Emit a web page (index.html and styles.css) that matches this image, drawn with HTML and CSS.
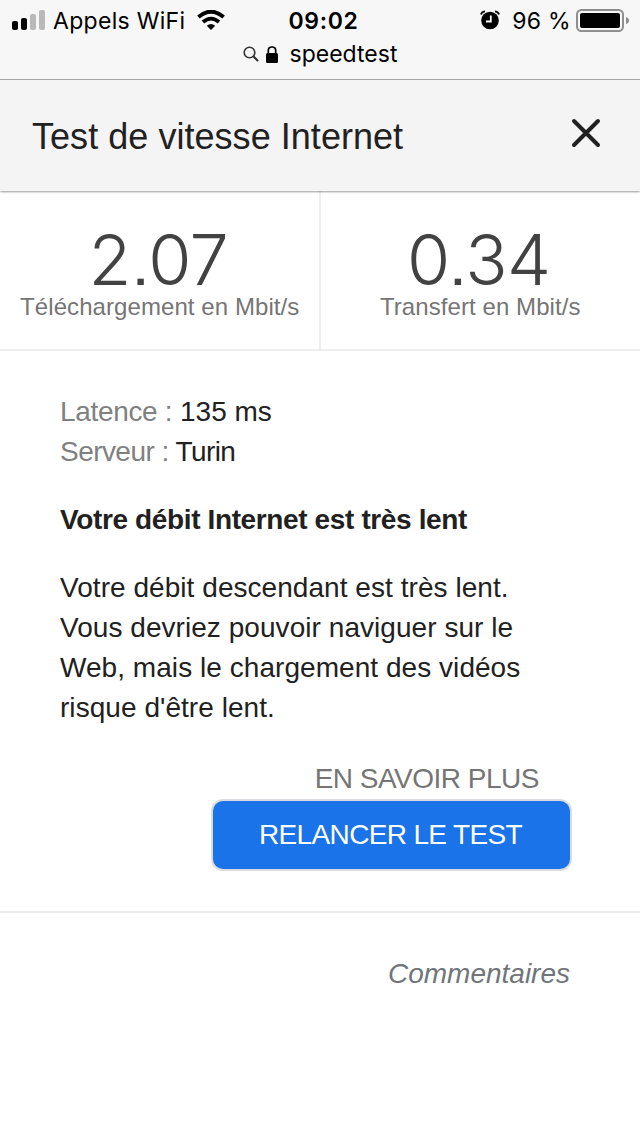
FILE: index.html
```
<!DOCTYPE html>
<html lang="fr">
<head>
    <meta charset="UTF-8">
    <meta name="viewport" content="width=device-width, initial-scale=1.0">
    <title>Test de vitesse Internet</title>
    <link rel="stylesheet" href="styles.css">
</head>
<body>
    <div class="browser-bar">
        <div class="status">
            <div class="status-left">
                <svg class="signal" width="34" height="20" viewBox="0 0 34 20">
                    <rect x="0" y="11" width="6" height="9" rx="2"/>
                    <rect x="9" y="8" width="6" height="12" rx="2"/>
                    <rect x="18" y="4" width="6" height="16" rx="2" fill="#b9b9b9"/>
                    <rect x="27" y="0" width="6" height="20" rx="2" fill="#b9b9b9"/>
                </svg>
                <span class="carrier">Appels WiFi</span>
                <svg class="wifi" width="28" height="20" viewBox="0 0 28 20">
                    <path d="M1.400 7Q14-3.600 26.600 7" fill="none" stroke="#000" stroke-width="4"/>
                    <path d="M6 12Q14 5.200 22 12" fill="none" stroke="#000" stroke-width="3.800"/>
                    <path d="M9.800 15.800Q14 12.200 18.200 15.800L14 20z"/>
                </svg>
            </div>
            <span class="clock">09:02</span>
            <div class="status-right">
                <svg class="alarm" width="20" height="20" viewBox="0 0 20 20">
                    <circle cx="10" cy="10.5" r="8.8"/>
                    <path d="M1 4.500Q1.500 1.800 5 1.300M19 4.500Q18.500 1.800 15 1.300" fill="none" stroke="#000" stroke-width="1.800"/>
                    <path d="M10.800 5.500V11.500H6" fill="none" stroke="#fff" stroke-width="1.800"/>
                </svg>
                <span class="percent">96 %</span>
                <svg class="battery" width="54" height="24" viewBox="0 0 54 24">
                    <rect x="1" y="1" width="46" height="21" rx="4.500" fill="none" stroke="#8e8e8e" stroke-width="2"/>
                    <rect x="4" y="4" width="40" height="15" rx="2"/>
                    <path d="M50 8Q53 9 53 11.500T50 15z" fill="#8e8e8e"/>
                </svg>
            </div>
        </div>
        <div class="address">
            <svg class="search" width="16" height="16" viewBox="0 0 16 16" fill="none" stroke="#333">
                <circle cx="6.500" cy="6.500" r="5.300" stroke-width="1.600"/>
                <path d="M10.300 10.300L15 15" stroke-width="2.200"/>
            </svg>
            <svg class="lock" width="12" height="17" viewBox="0 0 12 17">
                <rect x="0" y="7" width="12" height="10" rx="1.500"/>
                <path d="M2.300 8V4.500Q2.300 1 6 1T9.700 4.500V8" fill="none" stroke="#000" stroke-width="1.700"/>
            </svg>
            <span class="query">speedtest</span>
        </div>
    </div>

    <div class="header">
        <h1>Test de vitesse Internet</h1>
        <svg class="close" width="30" height="30" viewBox="0 0 30 30">
            <path d="M3 3L27 27M27 3L3 27" stroke="#212121" stroke-width="4" stroke-linecap="round"/>
        </svg>
    </div>

    <div class="results">
        <div class="result">
            <div class="value">2.07</div>
            <div class="unit">Téléchargement en Mbit/s</div>
        </div>
        <div class="result">
            <div class="value">0.34</div>
            <div class="unit">Transfert en Mbit/s</div>
        </div>
    </div>

    <div class="details">
        <div class="info latency"><span>Latence :</span> 135 ms</div>
        <div class="info server"><span>Serveur :</span> Turin</div>
        <h2>Votre débit Internet est très lent</h2>
        <p>Votre débit descendant est très lent.<br>Vous devriez pouvoir naviguer sur le<br>Web, mais le chargement des vidéos<br>risque d'être lent.</p>
        <div class="actions">
            <a class="more">EN SAVOIR PLUS</a>
            <button type="button" class="btn-restart">RELANCER LE TEST</button>
        </div>
    </div>

    <div class="footer"><a>Commentaires</a></div>
</body>
</html>
```
FILE: styles.css
```
* {
    box-sizing: border-box;
}
body {
    margin: 0;
    background-color: #fff;
    color: #212121;
    font-family: "Liberation Sans", Arial, sans-serif;
    font-size: 28px;
    line-height: 40px;
}
svg {
    display: block;
    flex: none;
}
/* Status bar and address */
.browser-bar {
    height: 80px;
    background-color: #f7f7f7;
    border-bottom: 1px solid #aaa;
    color: #000;
    font-family: Inter, sans-serif;
    font-size: 23px;
}
.status {
    display: grid;
    grid-template-columns: 1fr auto 1fr;
    height: 40px;
    padding: 0 10px 0 12px;
}
.status-left,
.status-right {
    display: flex;
    align-items: center;
    height: 40px;
}
.status-right {
    justify-content: flex-end;
}
.carrier {
    margin-left: 7px;
    padding-top: 1px;
    letter-spacing: 0.3px;
}
.wifi {
    margin-left: 12px;
}
.clock {
    padding: 1px 0 0 5px;
    font-weight: 600;
    letter-spacing: 0.7px;
}
.percent {
    margin: 0 5px 0 12px;
    padding-top: 1px;
    letter-spacing: 0.3px;
}
.alarm {
    margin-bottom: 1px;
}
.battery {
    margin-top: 2px;
}
.address {
    display: flex;
    align-items: center;
    justify-content: center;
    height: 28px;
}
.lock {
    margin: 0 12px 0 7px;
}
/* Page header */
.header {
    position: relative;
    display: flex;
    align-items: center;
    justify-content: space-between;
    height: 111px;
    padding: 0 39px 0 32px;
    background-color: #f4f4f4;
    box-shadow: 0 1px 2px rgba(0, 0, 0, 0.4);
}
h1 {
    margin: 3px 0 0;
    font-size: 36px;
    font-weight: 400;
    letter-spacing: 0.04px;
}
.close {
    margin-bottom: 5px;
}
/* Speeds */
.results {
    display: flex;
    height: 160px;
    border-bottom: 2px solid #eee;
}
.result {
    flex: 1;
    padding-top: 39px;
    text-align: center;
}
.result + .result {
    border-left: 2px solid #eee;
    margin-left: -1px;
}
.value {
    padding-right: 3px;
    color: #424242;
    font-family: Inter, sans-serif;
    font-size: 70px;
    font-weight: 300;
    font-feature-settings: "ss07";
    letter-spacing: -0.6px;
    line-height: 60px;
}
.unit {
    color: #757575;
    font-size: 24px;
    letter-spacing: 0.08px;
    line-height: 34px;
}
/* Details */
.details {
    height: 562px;
    padding: 41px 68px 0 60px;
    border-bottom: 2px solid #eee;
}
.info span {
    color: #808080;
}
.latency span {
    letter-spacing: -0.33px;
}
.server {
    letter-spacing: -0.55px;
}
h2 {
    margin: 28px 0;
    font-size: 28px;
    letter-spacing: -0.37px;
    line-height: 40px;
}
p {
    margin: 0;
    letter-spacing: 0.05px;
    white-space: nowrap;
}
.actions {
    display: flex;
    flex-direction: column;
    align-items: flex-end;
    margin-top: 31px;
}
.more {
    padding-right: 33px;
    color: #757575;
    letter-spacing: -0.5px;
}
.btn-restart {
    width: 361px;
    height: 72px;
    padding: 0 2px 0 0;
    border: 2px solid #dadce0;
    border-radius: 12px;
    background-color: #1a73e8;
    color: #fff;
    font-family: inherit;
    font-size: 28px;
    letter-spacing: -0.65px;
}
.footer {
    padding: 41px 70px 0 0;
    color: #70757a;
    font-style: italic;
    text-align: right;
}
```
